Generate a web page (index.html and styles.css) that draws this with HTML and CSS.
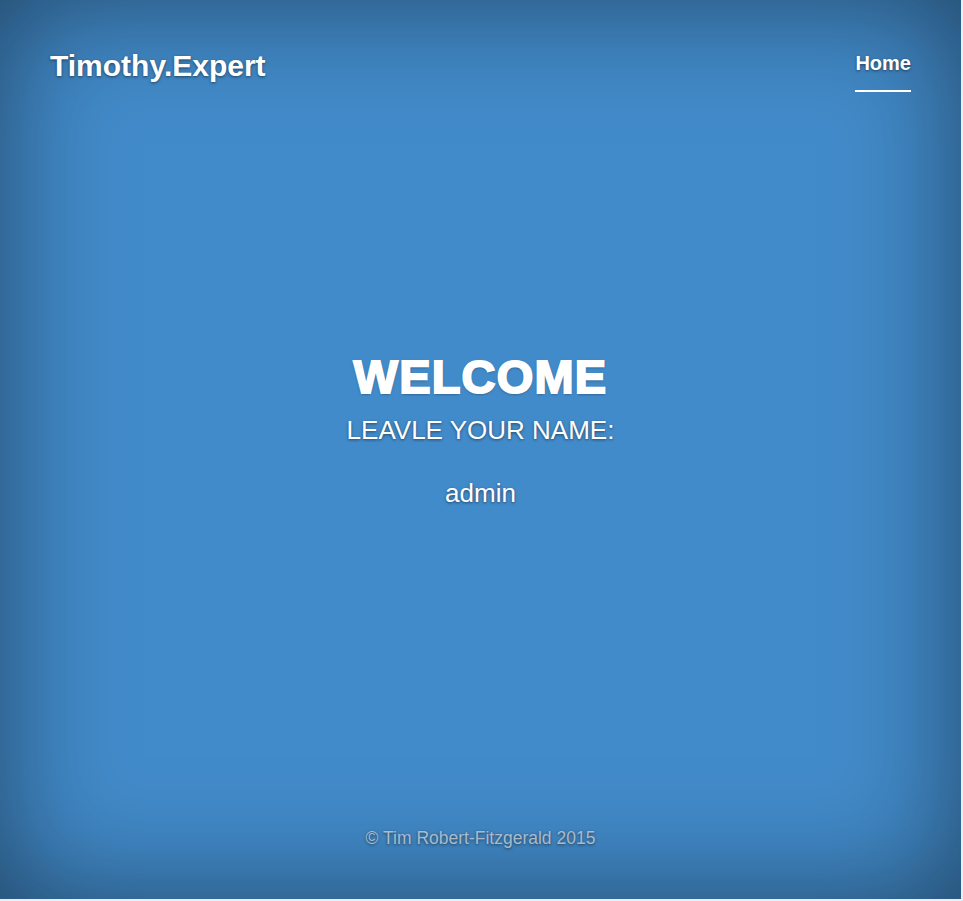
FILE: index.html
```html
<!DOCTYPE html>
<html lang="en">
<head>
<meta charset="utf-8">
<title>Timothy.Expert</title>
<link rel="stylesheet" href="styles.css">
</head>
<body>
<div class="page">
  <header class="masthead">
    <h3 class="brand">Timothy.Expert</h3>
    <nav class="nav">
      <a class="nav-link active" href="#">Home</a>
    </nav>
  </header>
  <main class="cover">
    <h1 class="cover-heading">WELCOME</h1>
    <p class="lead">LEAVLE YOUR NAME:</p>
    <p class="name">admin</p>
  </main>
  <footer class="mastfoot">
    <p>© Tim Robert-Fitzgerald 2015</p>
  </footer>
</div>
</body>
</html>
```

FILE: styles.css
```css
html, body {
  margin: 0;
  padding: 0;
  background: #eeeeee;
}

.page {
  width: 961px;
  height: 899px;
  background: #428bca;
  box-shadow: inset 0 0 120px rgba(0, 0, 0, 0.5);
  display: flex;
  flex-direction: column;
  font-family: "Liberation Sans", Arial, sans-serif;
  color: #fff;
  text-shadow: 0 1px 3px rgba(0, 0, 0, 0.5);
}

.masthead {
  display: flex;
  justify-content: space-between;
  align-items: flex-start;
  padding: 51px 50px 0 50px;
}

.brand {
  margin: 0;
  font-size: 30px;
  line-height: 1;
  font-weight: bold;
}

.nav {
  display: flex;
  margin-top: 2px;
}

.nav-link {
  display: block;
  color: #fff;
  text-decoration: none;
  font-weight: bold;
  font-size: 20px;
  line-height: 1;
  padding-bottom: 17px;
  border-bottom: 2px solid #fff;
}

.cover {
  flex: 1;
  padding-top: 261px;
  text-align: center;
}

.cover-heading {
  margin: 0;
  font-size: 47px;
  line-height: 1;
  font-weight: bold;
  letter-spacing: 1.2px;
  -webkit-text-stroke: 2px #fff;
}

.lead {
  margin: 17px 0 0;
  font-size: 26px;
  line-height: 1;
}

.name {
  margin: 37px 0 0;
  font-size: 26px;
  line-height: 1;
}

.mastfoot {
  text-align: center;
  padding-bottom: 52px;
}

.mastfoot p {
  margin: 0;
  font-size: 17.5px;
  line-height: 1;
  color: #a9bacb;
}
```
